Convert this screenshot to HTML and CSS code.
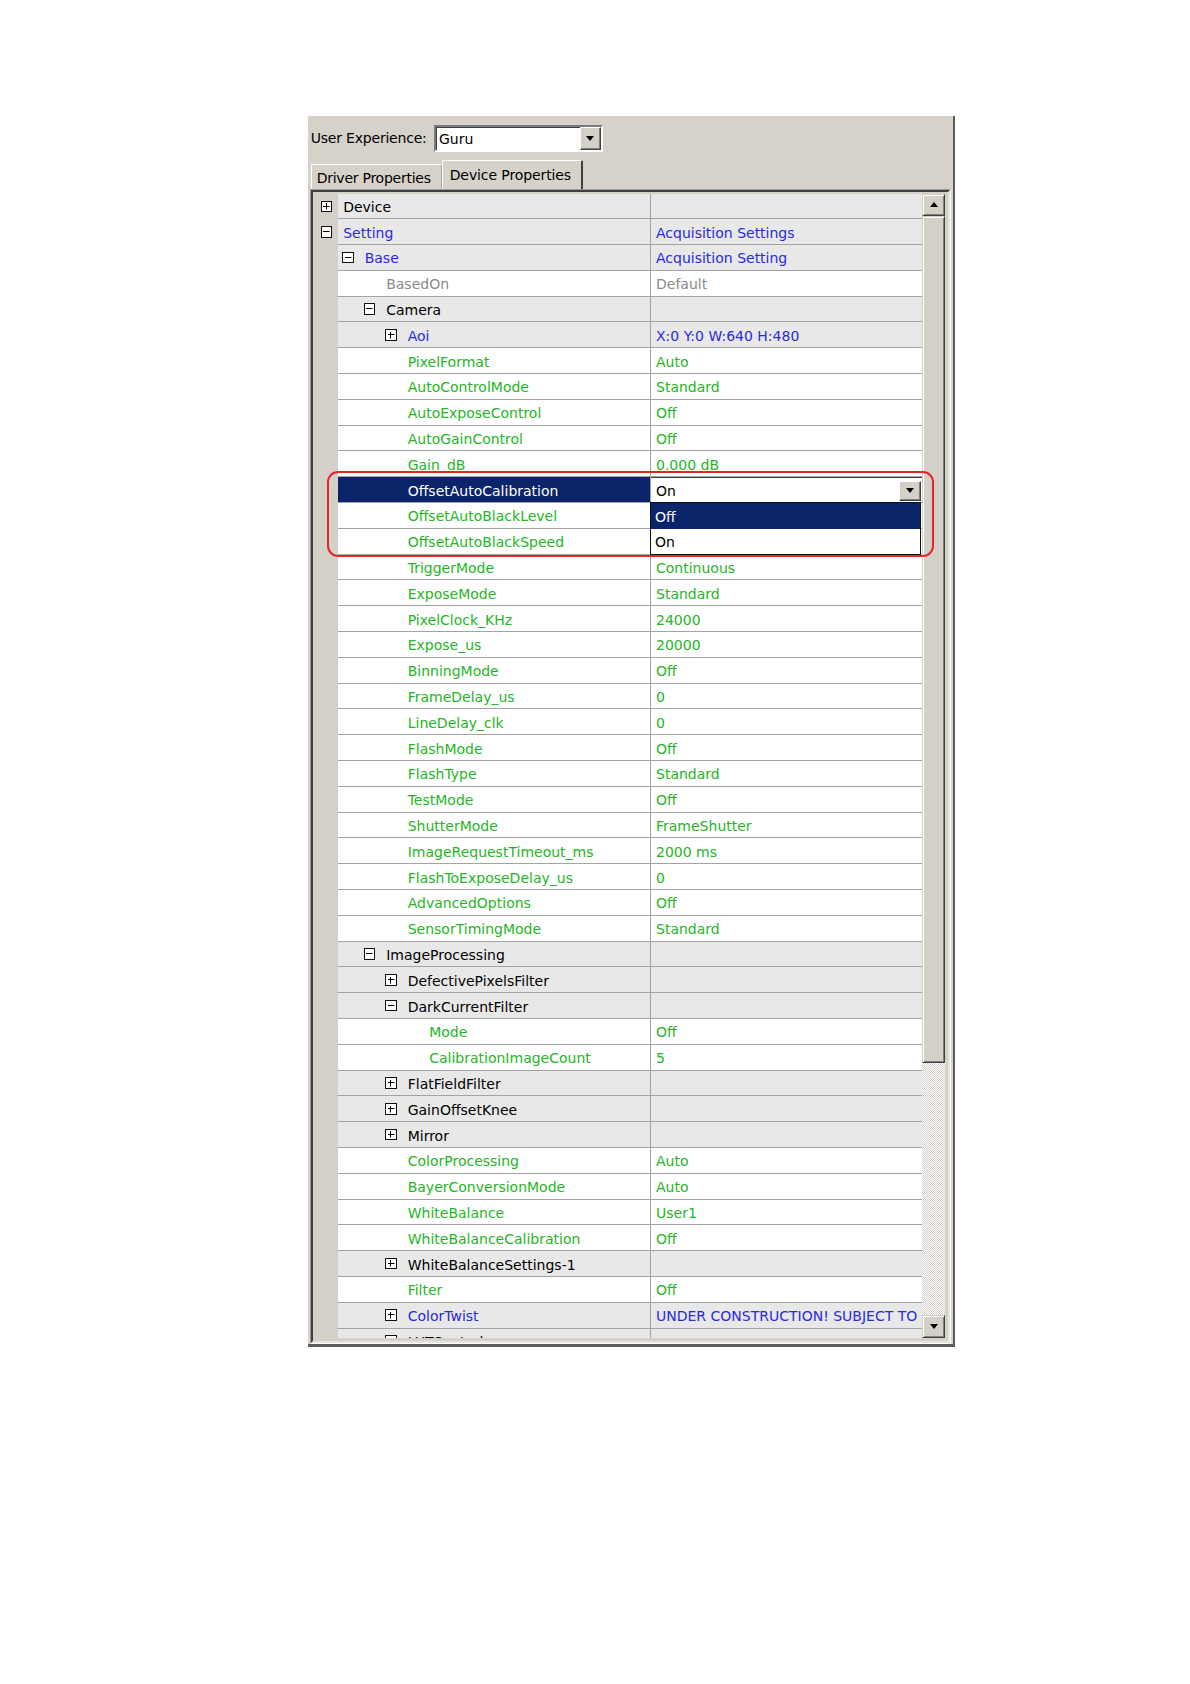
FILE: index.html
```html
<!DOCTYPE html>
<html>
<head>
<meta charset="utf-8">
<title>Device Properties</title>
<link rel="stylesheet" href="styles.css">
</head>
<body>
<div class="panel">
  <div class="toolbar">
    <span class="lbl">User Experience:</span>
    <div class="combo"><span class="ctext">Guru</span><span class="dbtn"><i class="tri"></i></span></div>
  </div>
  <div class="tabs">
    <div class="tab">Driver Properties</div>
    <div class="tab active">Device Properties</div>
  </div>
  <div class="frame">
    <div class="frame-in">
      <div class="rows">
        <div class="row cat"><div class="gut"><i class="box plus"></i></div><div class="name t0">Device</div><div class="val"></div></div>
        <div class="row cat"><div class="gut"><i class="box minus"></i></div><div class="name t0 bl">Setting</div><div class="val bl">Acquisition Settings</div></div>
        <div class="row cat"><div class="gut"></div><div class="name b1 bl"><i class="box minus"></i>Base</div><div class="val bl">Acquisition Setting</div></div>
        <div class="row"><div class="gut"></div><div class="name t2 gy">BasedOn</div><div class="val gy">Default</div></div>
        <div class="row cat"><div class="gut"></div><div class="name b2"><i class="box minus"></i>Camera</div><div class="val"></div></div>
        <div class="row cat"><div class="gut"></div><div class="name b3 bl"><i class="box plus"></i>Aoi</div><div class="val bl">X:0 Y:0 W:640 H:480</div></div>
        <div class="row"><div class="gut"></div><div class="name t3 gr">PixelFormat</div><div class="val gr">Auto</div></div>
        <div class="row"><div class="gut"></div><div class="name t3 gr">AutoControlMode</div><div class="val gr">Standard</div></div>
        <div class="row"><div class="gut"></div><div class="name t3 gr">AutoExposeControl</div><div class="val gr">Off</div></div>
        <div class="row"><div class="gut"></div><div class="name t3 gr">AutoGainControl</div><div class="val gr">Off</div></div>
        <div class="row"><div class="gut"></div><div class="name t3 gr">Gain_dB</div><div class="val gr">0.000 dB</div></div>
        <div class="row sel"><div class="gut"></div><div class="name t3">OffsetAutoCalibration</div>
          <div class="val edit"><span>On</span><span class="dbtn small"><i class="tri"></i></span>
            <div class="dlist"><div class="ditem hi">Off</div><div class="ditem">On</div></div>
          </div>
        </div>
        <div class="row"><div class="gut"></div><div class="name t3 gr">OffsetAutoBlackLevel</div><div class="val gr"></div></div>
        <div class="row"><div class="gut"></div><div class="name t3 gr">OffsetAutoBlackSpeed</div><div class="val gr"></div></div>
        <div class="row"><div class="gut"></div><div class="name t3 gr">TriggerMode</div><div class="val gr">Continuous</div></div>
        <div class="row"><div class="gut"></div><div class="name t3 gr">ExposeMode</div><div class="val gr">Standard</div></div>
        <div class="row"><div class="gut"></div><div class="name t3 gr">PixelClock_KHz</div><div class="val gr">24000</div></div>
        <div class="row"><div class="gut"></div><div class="name t3 gr">Expose_us</div><div class="val gr">20000</div></div>
        <div class="row"><div class="gut"></div><div class="name t3 gr">BinningMode</div><div class="val gr">Off</div></div>
        <div class="row"><div class="gut"></div><div class="name t3 gr">FrameDelay_us</div><div class="val gr">0</div></div>
        <div class="row"><div class="gut"></div><div class="name t3 gr">LineDelay_clk</div><div class="val gr">0</div></div>
        <div class="row"><div class="gut"></div><div class="name t3 gr">FlashMode</div><div class="val gr">Off</div></div>
        <div class="row"><div class="gut"></div><div class="name t3 gr">FlashType</div><div class="val gr">Standard</div></div>
        <div class="row"><div class="gut"></div><div class="name t3 gr">TestMode</div><div class="val gr">Off</div></div>
        <div class="row"><div class="gut"></div><div class="name t3 gr">ShutterMode</div><div class="val gr">FrameShutter</div></div>
        <div class="row"><div class="gut"></div><div class="name t3 gr">ImageRequestTimeout_ms</div><div class="val gr">2000 ms</div></div>
        <div class="row"><div class="gut"></div><div class="name t3 gr">FlashToExposeDelay_us</div><div class="val gr">0</div></div>
        <div class="row"><div class="gut"></div><div class="name t3 gr">AdvancedOptions</div><div class="val gr">Off</div></div>
        <div class="row"><div class="gut"></div><div class="name t3 gr">SensorTimingMode</div><div class="val gr">Standard</div></div>
        <div class="row cat"><div class="gut"></div><div class="name b2"><i class="box minus"></i>ImageProcessing</div><div class="val"></div></div>
        <div class="row cat"><div class="gut"></div><div class="name b3"><i class="box plus"></i>DefectivePixelsFilter</div><div class="val"></div></div>
        <div class="row cat"><div class="gut"></div><div class="name b3"><i class="box minus"></i>DarkCurrentFilter</div><div class="val"></div></div>
        <div class="row"><div class="gut"></div><div class="name t4 gr">Mode</div><div class="val gr">Off</div></div>
        <div class="row"><div class="gut"></div><div class="name t4 gr">CalibrationImageCount</div><div class="val gr">5</div></div>
        <div class="row cat"><div class="gut"></div><div class="name b3"><i class="box plus"></i>FlatFieldFilter</div><div class="val"></div></div>
        <div class="row cat"><div class="gut"></div><div class="name b3"><i class="box plus"></i>GainOffsetKnee</div><div class="val"></div></div>
        <div class="row cat"><div class="gut"></div><div class="name b3"><i class="box plus"></i>Mirror</div><div class="val"></div></div>
        <div class="row"><div class="gut"></div><div class="name t3 gr">ColorProcessing</div><div class="val gr">Auto</div></div>
        <div class="row"><div class="gut"></div><div class="name t3 gr">BayerConversionMode</div><div class="val gr">Auto</div></div>
        <div class="row"><div class="gut"></div><div class="name t3 gr">WhiteBalance</div><div class="val gr">User1</div></div>
        <div class="row"><div class="gut"></div><div class="name t3 gr">WhiteBalanceCalibration</div><div class="val gr">Off</div></div>
        <div class="row cat"><div class="gut"></div><div class="name b3"><i class="box plus"></i>WhiteBalanceSettings-1</div><div class="val"></div></div>
        <div class="row"><div class="gut"></div><div class="name t3 gr">Filter</div><div class="val gr">Off</div></div>
        <div class="row cat"><div class="gut"></div><div class="name b3 bl"><i class="box plus"></i>ColorTwist</div><div class="val bl">UNDER CONSTRUCTION! SUBJECT TO</div></div>
        <div class="row cat"><div class="gut"></div><div class="name b3"><i class="box plus"></i>LUTControls</div><div class="val"></div></div>
      </div>
      <div class="vscroll">
        <div class="sbtn"><i class="tri up"></i></div>
        <div class="thumb"></div>
        <div class="track"></div>
        <div class="sbtn"><i class="tri"></i></div>
      </div>
    </div>
  </div>
</div>
<div class="annot"></div>
</body>
</html>
```

FILE: styles.css
```css
html, body {
  margin: 0;
  background: #fff;
}
body {
  font-family: "DejaVu Sans", "Liberation Sans", sans-serif;
  font-size: 14px;
  color: #000;
}

.panel {
  box-sizing: border-box;
  margin: 116px 0 0 307.5px;
  width: 647.5px;
  height: 1231px;
  background: #d6d2ca;
  border-right: 2px solid #5a5a5a;
  border-bottom: 3px solid #5a5a5a;
}

/* toolbar */
.toolbar {
  height: 44px;
  display: flex;
  align-items: center;
  padding-left: 3.2px;
}
.lbl {
  width: 123.3px;
  white-space: nowrap;
  letter-spacing: -0.2px;
}
.combo {
  box-sizing: border-box;
  width: 169px;
  height: 27px;
  background: #fff;
  border: 2px solid;
  border-color: #7a7a7a #fff #fff #7a7a7a;
  box-shadow: inset 1px 1px 0 #404040;
  display: flex;
  align-items: center;
  justify-content: space-between;
  padding: 1px 0 0 3px;
}
.ctext { padding-top: 1px; }
.dbtn {
  box-sizing: border-box;
  width: 21px;
  height: 23px;
  margin-top: -1px;
  background: #d4d0c8;
  border: 1px solid;
  border-color: #fff #404040 #404040 #fff;
  box-shadow: inset -1px -1px 0 #808080;
  display: flex;
  align-items: center;
  justify-content: center;
}
.dbtn.small {
  width: 22px;
  height: 20px;
  margin: 0 1px 0 0;
}
.tri {
  display: block;
  width: 0;
  height: 0;
  border-left: 4.5px solid transparent;
  border-right: 4.5px solid transparent;
  border-top: 5px solid #000;
}
.tri.up {
  border-top: 0;
  border-bottom: 5px solid #000;
}

/* tabs */
.tabs {
  height: 29px;
  display: flex;
  align-items: flex-end;
  padding-left: 3.2px;
}
.tab {
  box-sizing: border-box;
  height: 25px;
  width: 131px;
  padding: 2px 0 0 5px;
  display: flex;
  align-items: center;
  white-space: nowrap;
  letter-spacing: -0.25px;
  border-top: 1px solid #fff;
  border-left: 1px solid #fff;
  border-right: 1px solid #a8a49c;
  border-radius: 2px 2px 0 0;
}
.tab.active {
  height: 29px;
  width: 141px;
  padding: 0 0 0 7px;
  letter-spacing: -0.1px;
  border-right: 2px solid #404040;
}

/* grid frame */
.frame {
  box-sizing: border-box;
  margin-left: 2.5px;
  width: 641px;
  height: 1155px;
  border: 1px solid;
  border-color: #9a9a9a #fff #fff #9a9a9a;
}
.frame-in {
  box-sizing: border-box;
  height: 100%;
  border: 2px solid;
  border-color: #404040 #e6e4e0 #e6e4e0 #404040;
  padding: 1.5px 3px 3px 0;
  display: flex;
}
.rows {
  flex: 1;
  overflow: hidden;
  background: #d4d0c8;
}

.row {
  display: grid;
  grid-template-columns: 24.5px 313.5px 1fr;
  height: 25.8px;
}
.gut {
  background: #d4d0c8;
  display: flex;
  align-items: center;
  padding-left: 7.7px;
}
.name, .val {
  box-sizing: border-box;
  height: 25.8px;
  display: flex;
  align-items: center;
  padding-top: 2px;
  white-space: nowrap;
  overflow: hidden;
  background: #fff;
  border-bottom: 1px solid #a3a3a3;
}
.name {
  border-right: 1px solid #a3a3a3;
}
.val {
  padding-left: 5px;
}
.row.cat .name, .row.cat .val {
  background: #e8e8e8;
}

.t0 { padding-left: 5.7px; }
.t2 { padding-left: 48.7px; }
.t3 { padding-left: 70.2px; }
.t4 { padding-left: 91.7px; }
.b1 { padding-left: 4.7px; }
.b2 { padding-left: 26.2px; }
.b3 { padding-left: 47.7px; }

.box {
  display: block;
  box-sizing: border-box;
  flex: none;
  width: 11.5px;
  height: 11.5px;
  margin: -2px 11px 0 0;
  border: 1.2px solid #111;
  background: #fff;
}
.gut .box { margin: 0; }
.box.minus {
  background:
    linear-gradient(#000, #000) center / 6.5px 1.4px no-repeat,
    #fff;
}
.box.plus {
  background:
    linear-gradient(#000, #000) center / 6.5px 1.4px no-repeat,
    linear-gradient(#000, #000) center / 1.4px 6.5px no-repeat,
    #fff;
}

.bl { color: #2a2ae0; }
.gr { color: #25b625; }
.gy { color: #8a8a8a; }

/* selected row with editor */
.row.sel .name {
  background: #0a246a;
  color: #fff;
}
.val.edit {
  position: relative;
  overflow: visible;
  background: #fff;
  color: #000;
  border-top: 1px solid #404040;
  padding-top: 1px;
  justify-content: space-between;
  padding-left: 5px;
}
.dlist {
  position: absolute;
  left: -1px;
  top: 100%;
  width: 271px;
  box-sizing: border-box;
  border: 1px solid #111;
  background: #fff;
  z-index: 5;
}
.ditem {
  height: 25.5px;
  display: flex;
  align-items: center;
  padding: 2px 0 0 4px;
  box-sizing: border-box;
  color: #000;
}
.ditem.hi {
  background: #0a246a;
  color: #fff;
}

/* scrollbar */
.vscroll {
  width: 23px;
  display: flex;
  flex-direction: column;
}
.sbtn, .thumb {
  box-sizing: border-box;
  background: #d4d0c8;
  border: 1px solid;
  border-color: #d4d0c8 #404040 #404040 #d4d0c8;
  box-shadow: inset 1px 1px 0 #fff, inset -1px -1px 0 #808080;
}
.sbtn {
  height: 22.8px;
  flex: none;
  display: flex;
  align-items: center;
  justify-content: center;
}
.thumb {
  height: 846.4px;
  flex: none;
}
.track {
  flex: 1;
  background: repeating-conic-gradient(#d4d0c8 0 25%, #fff 0 50%) 0 0 / 2px 2px;
}

/* red annotation frame drawn over the grid */
.annot {
  position: absolute;
  left: 327px;
  top: 471px;
  width: 607px;
  height: 86px;
  box-sizing: border-box;
  border: 2.5px solid #e3262a;
  border-radius: 11px;
  z-index: 10;
  pointer-events: none;
}
```
